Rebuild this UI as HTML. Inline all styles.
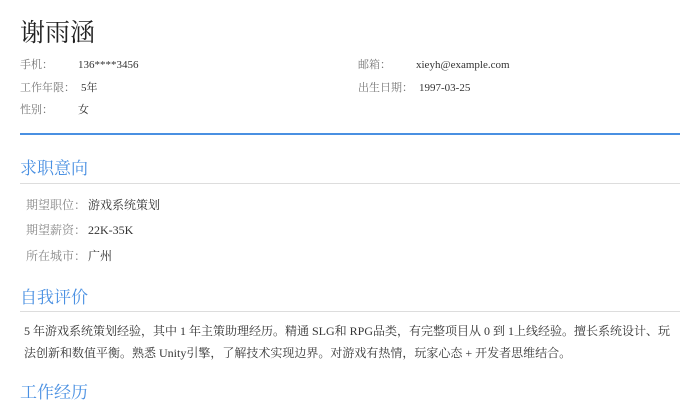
<!DOCTYPE html>
<html><head><meta charset="utf-8"><style>
body{margin:0;width:700px;height:400px;overflow:hidden;background:#fff;font-family:"Liberation Serif","Noto Serif CJK SC",serif;color:#333;position:relative}
div{position:absolute;white-space:nowrap;line-height:16px}
.l{color:#777;font-size:11px}
.v{color:#333;font-size:11px}
.h{color:#4a90e2;font-size:17px;left:20px;line-height:20px}
.g{left:20px;width:660px;height:1px;background:#ddd}
.k{color:#888;font-size:12px;left:26px}
.w{color:#333;font-size:12px;left:88px}
</style></head><body>
<div style="left:20px;top:19px;font-size:25px;line-height:30px;color:#222">谢雨涵</div>
<div class="l" style="left:20px;top:57px">手机：</div><div class="v" style="left:78px;top:57px">136****3456</div>
<div class="l" style="left:20px;top:80px">工作年限：</div><div class="v" style="left:81px;top:80px">5年</div>
<div class="l" style="left:20px;top:102px">性别：</div><div class="v" style="left:78px;top:102px">女</div>
<div class="l" style="left:358px;top:57px">邮箱：</div><div class="v" style="left:416px;top:57px">xieyh@example.com</div>
<div class="l" style="left:358px;top:80px">出生日期：</div><div class="v" style="left:419px;top:80px">1997-03-25</div>
<div style="left:20px;top:133px;width:660px;height:2px;background:#4a90e2"></div>
<div class="h" style="top:159px">求职意向</div>
<div class="g" style="top:183px"></div>
<div class="k" style="top:197px">期望职位：</div><div class="w" style="top:197px">游戏系统策划</div>
<div class="k" style="top:222px">期望薪资：</div><div class="w" style="top:222px">22K-35K</div>
<div class="k" style="top:248px">所在城市：</div><div class="w" style="top:248px">广州</div>
<div class="h" style="top:288px">自我评价</div>
<div class="g" style="top:311px"></div>
<div style="left:24px;top:320px;font-size:12px;line-height:22px;color:#333">5 年游戏系统策划经验，其中 1 年主策助理经历。精通 SLG和 RPG品类，有完整项目从 0 到 1上线经验。擅长系统设计、玩<br>法创新和数值平衡。熟悉 Unity引擎，了解技术实现边界。对游戏有热情，玩家心态 + 开发者思维结合。</div>
<div class="h" style="top:383px">工作经历</div>
</body></html>
